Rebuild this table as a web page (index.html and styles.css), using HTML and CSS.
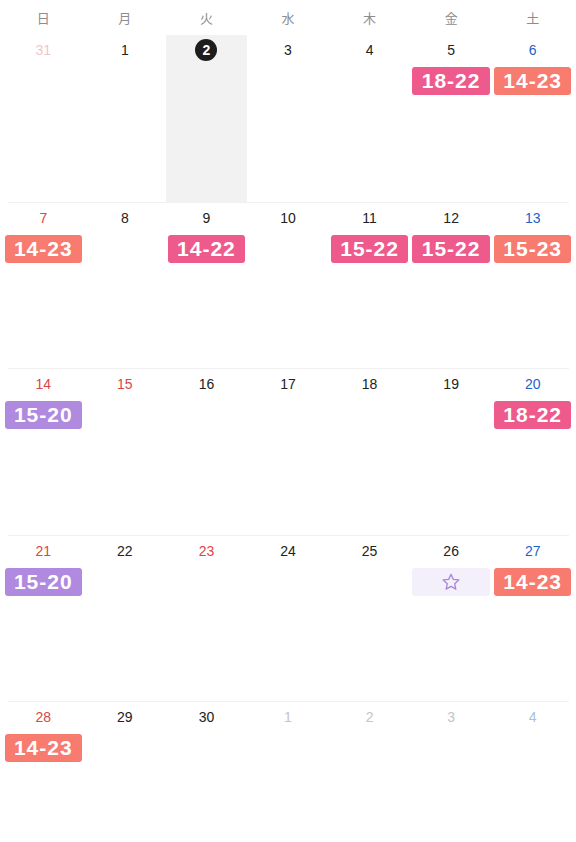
FILE: index.html
```html
<!DOCTYPE html>
<html lang="ja">
<head>
<meta charset="utf-8">
<title>カレンダー</title>
<link rel="stylesheet" href="styles.css">
</head>
<body>
<div class="cal">
  <div class="head">
    <div>日</div><div>月</div><div>火</div><div>水</div><div>木</div><div>金</div><div>土</div>
  </div>

  <div class="week first">
    <div class="cell"><span class="num out-sun">31</span></div>
    <div class="cell"><span class="num">1</span></div>
    <div class="cell today"><span class="num"><span class="dot">2</span></span></div>
    <div class="cell"><span class="num">3</span></div>
    <div class="cell"><span class="num">4</span></div>
    <div class="cell"><span class="num">5</span><span class="badge pink">18-22</span></div>
    <div class="cell"><span class="num sat">6</span><span class="badge salmon">14-23</span></div>
  </div>

  <div class="week">
    <div class="cell"><span class="num sun">7</span><span class="badge salmon">14-23</span></div>
    <div class="cell"><span class="num">8</span></div>
    <div class="cell"><span class="num">9</span><span class="badge pink">14-22</span></div>
    <div class="cell"><span class="num">10</span></div>
    <div class="cell"><span class="num">11</span><span class="badge pink">15-22</span></div>
    <div class="cell"><span class="num">12</span><span class="badge pink">15-22</span></div>
    <div class="cell"><span class="num sat">13</span><span class="badge salmon">15-23</span></div>
  </div>

  <div class="week">
    <div class="cell"><span class="num sun">14</span><span class="badge purple">15-20</span></div>
    <div class="cell"><span class="num sun">15</span></div>
    <div class="cell"><span class="num">16</span></div>
    <div class="cell"><span class="num">17</span></div>
    <div class="cell"><span class="num">18</span></div>
    <div class="cell"><span class="num">19</span></div>
    <div class="cell"><span class="num sat">20</span><span class="badge pink">18-22</span></div>
  </div>

  <div class="week">
    <div class="cell"><span class="num sun">21</span><span class="badge purple">15-20</span></div>
    <div class="cell"><span class="num">22</span></div>
    <div class="cell"><span class="num sun">23</span></div>
    <div class="cell"><span class="num">24</span></div>
    <div class="cell"><span class="num">25</span></div>
    <div class="cell"><span class="num">26</span><span class="badge star"><svg width="20" height="20" viewBox="0 0 24 24"><path d="M12 2.8l2.75 6.05 6.6.7-4.95 4.45 1.4 6.5L12 17.2l-5.8 3.3 1.4-6.5-4.95-4.45 6.6-.7z" fill="none" stroke="#ad86dc" stroke-width="1.6" stroke-linejoin="round"/></svg></span></div>
    <div class="cell"><span class="num sat">27</span><span class="badge salmon">14-23</span></div>
  </div>

  <div class="week">
    <div class="cell"><span class="num sun">28</span><span class="badge salmon">14-23</span></div>
    <div class="cell"><span class="num">29</span></div>
    <div class="cell"><span class="num">30</span></div>
    <div class="cell"><span class="num out">1</span></div>
    <div class="cell"><span class="num out">2</span></div>
    <div class="cell"><span class="num out">3</span></div>
    <div class="cell"><span class="num out-sat">4</span></div>
  </div>
</div>
</body>
</html>
```

FILE: styles.css
```css
html, body {
  margin: 0;
  padding: 0;
  background: #fff;
  overflow: hidden;
}
body {
  width: 576px;
  height: 842px;
  font-family: "Noto Sans CJK JP", "Noto Sans", sans-serif;
  color: #222;
}
.cal {
  display: flex;
  flex-direction: column;
  padding: 0 2.5px;
}
.head {
  display: grid;
  grid-template-columns: repeat(7, 1fr);
  height: 35px;
  align-items: center;
  font-size: 13px;
  color: #8d8d8d;
  text-align: center;
}
.head div {
  line-height: 35px;
}
.week {
  display: grid;
  grid-template-columns: repeat(7, 1fr);
  height: 166.5px;
  position: relative;
  box-sizing: border-box;
}
.week:not(.first) {
  border-top: 1px solid transparent;
}
.week:not(.first)::before {
  content: "";
  position: absolute;
  top: -1px;
  left: 5px;
  right: 5px;
  height: 1px;
  background: #f1f1f1;
}
.cell {
  display: flex;
  flex-direction: column;
  align-items: stretch;
  padding-top: 6px;
}
.cell.today {
  background: #f2f2f2;
}
.num {
  display: flex;
  justify-content: center;
  align-items: center;
  height: 18px;
  font-family: "Liberation Sans", "Noto Sans", sans-serif;
  font-size: 14px;
  color: #222;
  margin-bottom: 8px;
}
.num.sun { color: #dc4646; }
.num.sat { color: #1f5fc6; }
.num.out { color: #c4c4c4; }
.num.out-sun { color: #f2c5cb; }
.num.out-sat { color: #a8c0e4; }
.dot {
  width: 22px;
  height: 22px;
  border-radius: 50%;
  background: #1d1d1d;
  color: #fff;
  font-weight: bold;
  font-size: 14px;
  display: flex;
  align-items: center;
  justify-content: center;
}
.badge {
  display: flex;
  align-items: center;
  justify-content: center;
  height: 28px;
  margin: 0 2px;
  border-radius: 3px;
  color: #fff;
  font-family: "Liberation Sans", "Noto Sans", sans-serif;
  font-weight: bold;
  font-size: 21px;
  letter-spacing: 1px;
}
.badge.pink { background: #ee5a8b; }
.badge.salmon { background: #f77b6f; }
.badge.purple { background: #b08adf; }
.badge.star { background: #f4f0fb; }
```
